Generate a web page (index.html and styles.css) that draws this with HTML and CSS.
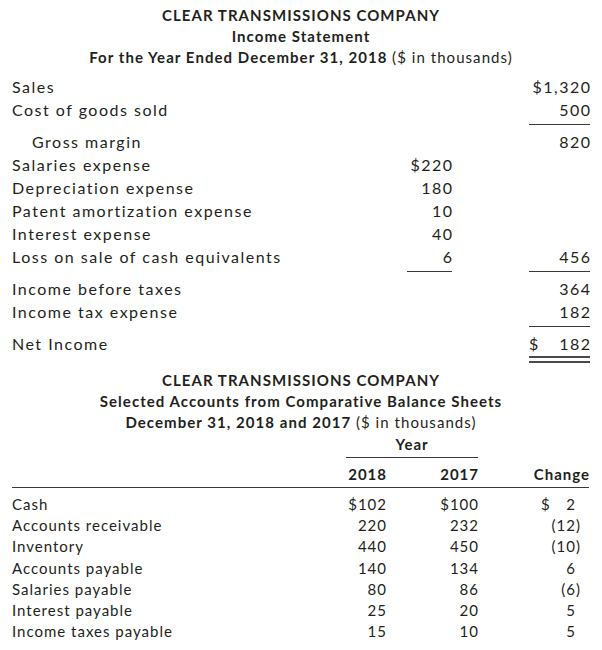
FILE: index.html
```html
<!DOCTYPE html>
<html lang="en">
<head>
<meta charset="utf-8">
<title>Clear Transmissions Company</title>
<link rel="stylesheet" href="styles.css">
</head>
<body>
<main class="page">
  <section class="statement">
    <header class="titles">
      <h1 class="t">CLEAR TRANSMISSIONS COMPANY</h1>
      <h2 class="t">Income Statement</h2>
      <h2 class="t">For the Year Ended December 31, 2018 <span class="light">($ in thousands)</span></h2>
    </header>
    <div class="is">
      <div class="is-row"><span class="lbl">Sales</span><span class="num"></span><span class="num"><span class="v">$1,320</span></span></div>
      <div class="is-row sub"><span class="lbl">Cost of goods sold</span><span class="num"></span><span class="num ul"><span class="v">500</span></span></div>
      <div class="is-row"><span class="lbl indent">Gross margin</span><span class="num"></span><span class="num"><span class="v">820</span></span></div>
      <div class="is-row"><span class="lbl">Salaries expense</span><span class="num"><span class="v">$220</span></span><span class="num"></span></div>
      <div class="is-row"><span class="lbl">Depreciation expense</span><span class="num"><span class="v">180</span></span><span class="num"></span></div>
      <div class="is-row"><span class="lbl">Patent amortization expense</span><span class="num"><span class="v">10</span></span><span class="num"></span></div>
      <div class="is-row"><span class="lbl">Interest expense</span><span class="num"><span class="v">40</span></span><span class="num"></span></div>
      <div class="is-row sub"><span class="lbl">Loss on sale of cash equivalents</span><span class="num ul"><span class="v">6</span></span><span class="num ul"><span class="v">456</span></span></div>
      <div class="is-row"><span class="lbl">Income before taxes</span><span class="num"></span><span class="num"><span class="v">364</span></span></div>
      <div class="is-row sub"><span class="lbl">Income tax expense</span><span class="num"></span><span class="num ul"><span class="v">182</span></span></div>
      <div class="is-row total"><span class="lbl">Net Income</span><span class="num"></span><span class="num dbl split"><span class="cur">$</span><span class="v">182</span></span></div>
    </div>
  </section>

  <section class="balances">
    <header class="titles titles-bs">
      <h1 class="t">CLEAR TRANSMISSIONS COMPANY</h1>
      <h2 class="t">Selected Accounts from Comparative Balance Sheets</h2>
      <h2 class="t">December 31, 2018 and 2017 <span class="light">($ in thousands)</span></h2>
    </header>
    <div class="bs">
      <div class="bs-row year-row"><span></span><span class="yr">Year</span></div>
      <div class="bs-row head-row"><span></span><span class="num"><span class="v">2018</span></span><span class="num"><span class="v">2017</span></span><span class="num"><span class="v">Change</span></span></div>
      <div class="bs-row"><span class="lbl">Cash</span><span class="num"><span class="v">$102</span></span><span class="num"><span class="v">$100</span></span><span class="chg split"><span class="cur">$</span><span class="v">2</span></span></div>
      <div class="bs-row"><span class="lbl">Accounts receivable</span><span class="num"><span class="v">220</span></span><span class="num"><span class="v">232</span></span><span class="chg neg"><span class="v">(12)</span></span></div>
      <div class="bs-row"><span class="lbl">Inventory</span><span class="num"><span class="v">440</span></span><span class="num"><span class="v">450</span></span><span class="chg neg"><span class="v">(10)</span></span></div>
      <div class="bs-row"><span class="lbl">Accounts payable</span><span class="num"><span class="v">140</span></span><span class="num"><span class="v">134</span></span><span class="chg"><span class="v">6</span></span></div>
      <div class="bs-row"><span class="lbl">Salaries payable</span><span class="num"><span class="v">80</span></span><span class="num"><span class="v">86</span></span><span class="chg neg"><span class="v">(6)</span></span></div>
      <div class="bs-row"><span class="lbl">Interest payable</span><span class="num"><span class="v">25</span></span><span class="num"><span class="v">20</span></span><span class="chg"><span class="v">5</span></span></div>
      <div class="bs-row"><span class="lbl">Income taxes payable</span><span class="num"><span class="v">15</span></span><span class="num"><span class="v">10</span></span><span class="chg"><span class="v">5</span></span></div>
    </div>
  </section>
</main>
</body>
</html>
```

FILE: styles.css
```css
* {
  box-sizing: border-box;
  margin: 0;
  padding: 0;
}

html, body {
  background: #ffffff;
}

body {
  font-family: Lato, "Open Sans", sans-serif;
  color: #231f20;
}

.page {
  width: 602px;
  padding: 5px 12px 0 12px;
}

/* ---------- titles ---------- */
.titles {
  text-align: center;
  margin-bottom: 7px;
}

.t {
  font-size: 15px;
  line-height: 21px;
  font-weight: 700;
  letter-spacing: 1.05px;
}

.light {
  font-weight: 400;
}

/* ---------- income statement ---------- */
.is-row {
  display: grid;
  grid-template-columns: 1fr 45px 61px;
  column-gap: 77px;
  font-size: 16px;
  line-height: 23px;
  letter-spacing: 1.5px;
}

.indent {
  padding-left: 20px;
}

.num {
  text-align: right;
  white-space: nowrap;
}

.v {
  margin-right: -1.5px;
}

.is-row.sub {
  margin-bottom: 5px;
}

.is-row.sub > span {
  padding-bottom: 3px;
  border-bottom: 1px solid transparent;
}

.is-row.sub > .ul {
  border-bottom-color: #3a3a3a;
}

.is-row.total > span {
  padding-bottom: 1px;
}

.dbl {
  border-bottom: 7px double #4a4a4a;
}

.split {
  display: flex;
  justify-content: space-between;
}

/* ---------- balance sheet ---------- */
.balances {
  margin-top: 7px;
}

.titles-bs {
  margin-bottom: 1px;
}

.bs {
  margin-right: 1px;
}

.bs-row {
  display: grid;
  grid-template-columns: 1fr 40px 40px 59px;
  column-gap: 52px;
  font-size: 15px;
  line-height: 21.2px;
  letter-spacing: 1px;
}

.bs-row .v {
  margin-right: -1px;
}

.year-row,
.head-row {
  font-weight: 700;
  line-height: 21px;
}

.year-row .yr {
  grid-column: 2 / 4;
  text-align: center;
  padding-bottom: 2px;
  border-bottom: 1px solid #3a3a3a;
  margin-bottom: 6px;
}

.head-row {
  padding-bottom: 2px;
  border-bottom: 1px solid #3a3a3a;
  margin-bottom: 6px;
}

.chg {
  text-align: right;
  padding-left: 11px;
  padding-right: 14px;
  white-space: nowrap;
}

.chg.neg {
  padding-right: 9px;
}
```
